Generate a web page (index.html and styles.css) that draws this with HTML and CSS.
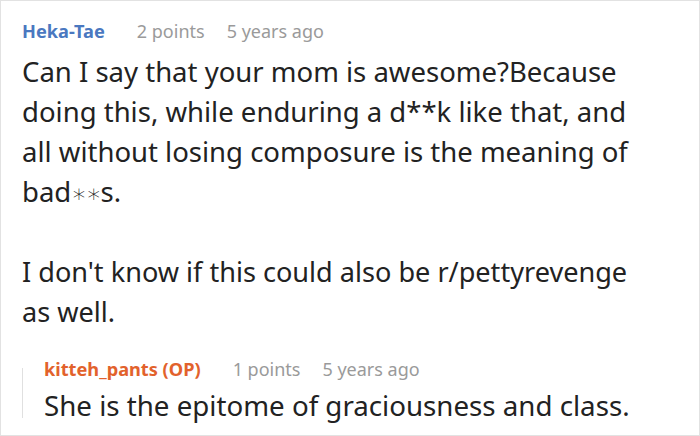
FILE: index.html
```html
<!DOCTYPE html>
<html>
<head>
<meta charset="utf-8">
<link rel="stylesheet" href="styles.css">
</head>
<body>
<div class="card">
  <div class="meta">
    <span class="author blue">Heka-Tae</span>
    <span class="stat">2 points</span>
    <span class="stat">5 years ago</span>
  </div>
  <div class="text">
    <p class="first">Can I say that your mom is awesome?Because<br>doing this, while enduring a d**k like that, and<br>all without losing composure is the meaning of<br>bad<span class="ast">∗∗</span>s.</p>
    <p class="second">I don't know if this could also be r/pettyrevenge<br>as well.</p>
  </div>
  <div class="reply">
    <div class="meta">
      <span class="author orange">kitteh_pants (OP)</span>
      <span class="stat">1 points</span>
      <span class="stat">5 years ago</span>
    </div>
    <div class="reply-text">She is the epitome of graciousness and class.</div>
  </div>
</div>
</body>
</html>
```
FILE: styles.css
```css
html, body {
  margin: 0;
  padding: 0;
  background: #fff;
}
body {
  font-family: "Noto Sans", "Open Sans", sans-serif;
  color: #222;
}
.card {
  box-sizing: border-box;
  width: 700px;
  height: 436px;
  border: 1px solid #e2e2e2;
  padding: 19px 20px 0 21px;
  overflow: hidden;
}
.meta {
  display: flex;
  gap: 22px;
  font-size: 18px;
  line-height: 22px;
  white-space: nowrap;
}
.author {
  font-weight: 700;
  margin-right: 10px;
  font-size: 18.2px;
}
.blue { color: #4a78c0; }
.orange { color: #e2622c; }
.stat { color: #9a9a9a; }
.text {
  margin-top: 10px;
  line-height: 40px;
  white-space: nowrap;
}
.text p {
  margin: 0 0 40px 0;
}
.text p:last-child { margin-bottom: 0; }
.first {
  font-size: 27.5px;
}
.ast {
  font-family: "DejaVu Sans", sans-serif;
  font-weight: 200;
  font-size: 25px;
  line-height: 1;
  color: #111;
  letter-spacing: -1px;
}
.second {
  font-size: 27.1px;
}
.reply {
  display: flow-root;
  margin-top: 36px;
  border-left: 1px solid #e0e0e0;
  padding-left: 21px;
}
.reply .meta {
  margin-top: -10px;
}
.reply-text {
  font-size: 27.7px;
  line-height: 26px;
  margin-top: 12px;
  white-space: nowrap;
}
```
